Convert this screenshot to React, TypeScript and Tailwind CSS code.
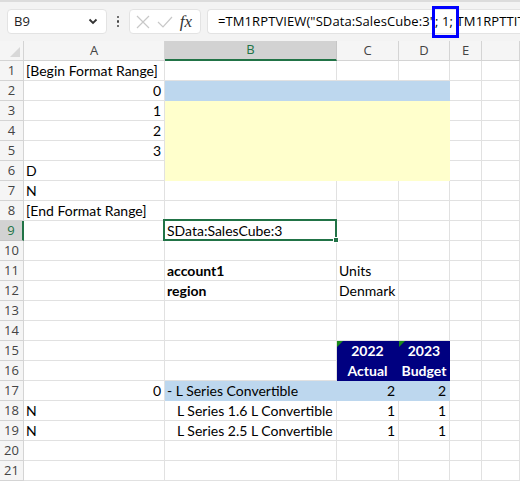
import React from "react";

type CellDef = {
  t?: string;
  align?: "l" | "r" | "c";
  bold?: boolean;
  fill?: "blue" | "yellow" | "navy";
  indent?: boolean;
  tri?: boolean;
};

const fillClass: Record<string, string> = {
  blue: "bg-[#bdd7ee] border-[#bdd7ee]",
  yellow: "bg-[#ffffcc] border-[#ffffcc]",
  navy: "bg-[#000080] border-[#000080] text-white",
};

// columns: A, B, C, D, E, F
const rows: CellDef[][] = [
  [{ t: "[Begin Format Range]" }],
  [{ t: "0", align: "r" }, { fill: "blue" }, { fill: "blue" }, { fill: "blue" }],
  [{ t: "1", align: "r" }, { fill: "yellow" }, { fill: "yellow" }, { fill: "yellow" }],
  [{ t: "2", align: "r" }, { fill: "yellow" }, { fill: "yellow" }, { fill: "yellow" }],
  [{ t: "3", align: "r" }, { fill: "yellow" }, { fill: "yellow" }, { fill: "yellow" }],
  [{ t: "D" }, { fill: "yellow" }, { fill: "yellow" }, { fill: "yellow" }],
  [{ t: "N" }],
  [{ t: "[End Format Range]" }],
  [{}, { t: "SData:SalesCube:3" }],
  [],
  [{}, { t: "account1", bold: true }, { t: "Units" }],
  [{}, { t: "region", bold: true }, { t: "Denmark" }],
  [],
  [],
  [{}, {}, { t: "2022", align: "c", bold: true, fill: "navy", tri: true }, { t: "2023", align: "c", bold: true, fill: "navy", tri: true }],
  [{}, {}, { t: "Actual", align: "c", bold: true, fill: "navy" }, { t: "Budget", align: "c", bold: true, fill: "navy" }],
  [{ t: "0", align: "r" }, { t: "- L Series Convertible", fill: "blue" }, { t: "2", align: "r", fill: "blue" }, { t: "2", align: "r", fill: "blue" }],
  [{ t: "N" }, { t: "L Series 1.6 L Convertible", indent: true }, { t: "1", align: "r" }, { t: "1", align: "r" }],
  [{ t: "N" }, { t: "L Series 2.5 L Convertible", indent: true }, { t: "1", align: "r" }, { t: "1", align: "r" }],
  [],
  [],
];

const colLetters = ["A", "B", "C", "D", "E", ""];

function Cell({ c, selected }: { c: CellDef; selected?: boolean }) {
  const align = c.align === "r" ? "justify-end pr-[3px]" : c.align === "c" ? "justify-center" : c.indent ? "justify-start pl-[12px]" : "justify-start pl-[2px]";
  return (
    <div
      className={`relative h-[20px] border-r border-b flex items-end pb-[1px] whitespace-nowrap overflow-visible text-[14px] leading-[16px] ${
        c.fill ? fillClass[c.fill] : "border-[#e1e1e1] text-black"
      } ${align} ${c.bold ? "font-bold" : ""}`}
    >
      {c.tri && (
        <span className="absolute left-0 top-0 w-0 h-0 border-t-[6px] border-t-[#1a8a1a] border-r-[6px] border-r-transparent" />
      )}
      {c.t && <span className="relative z-10">{c.t}</span>}
      {selected && (
        <span className="absolute left-[-2px] top-[-2px] right-[-1px] bottom-[-1px] border-2 border-[#217346] z-20">
          <span className="absolute right-[-4px] bottom-[-4px] w-[6px] h-[6px] bg-[#217346] border border-white" />
        </span>
      )}
    </div>
  );
}

export default function App() {
  return (
    <div className="relative w-[520px] h-[482px] overflow-hidden bg-white font-['Lato',sans-serif]">
      {/* formula bar */}
      <div className="h-[41px] bg-[#f3f3f3] border-t-2 border-[#dcdcdc] flex items-center pl-[7px] gap-[6px] font-['Open_Sans',sans-serif]">
        <div className="w-[100px] h-[25px] bg-white rounded-[4px] border border-[#e3e3e3] flex items-center justify-between pl-[6px] pr-[8px] text-[13px] text-[#222]">
          <span>B9</span>
          <svg width="10" height="7" viewBox="0 0 10 7">
            <path d="M1.5 1.5 L5 5 L8.5 1.5" stroke="#333" strokeWidth="1.8" fill="none" />
          </svg>
        </div>
        <div className="w-[10px] flex flex-col items-center gap-[2px]">
          <span className="w-[2.5px] h-[2.5px] rounded-full bg-[#444]" />
          <span className="w-[2.5px] h-[2.5px] rounded-full bg-[#444]" />
          <span className="w-[2.5px] h-[2.5px] rounded-full bg-[#444]" />
        </div>
        <div className="w-[72px] h-[25px] bg-white rounded-[4px] border border-[#e3e3e3] flex items-center justify-between px-[6px]">
          <svg width="14" height="14" viewBox="0 0 14 14">
            <path d="M1 1 L13 13 M13 1 L1 13" stroke="#c8c8c8" strokeWidth="1.2" />
          </svg>
          <svg width="16" height="12" viewBox="0 0 16 12">
            <path d="M1 6 L6 11 L15 1" stroke="#c8c8c8" strokeWidth="1.2" fill="none" />
          </svg>
          <span className="font-['Liberation_Serif',serif] italic text-[17px] text-[#333] leading-none pr-[2px]">fx</span>
        </div>
        <div className="flex-1 h-[25px] bg-white rounded-l-[4px] border border-r-0 border-[#e3e3e3] flex items-center pl-[10px] text-[13px] tracking-[0.1px] text-black whitespace-nowrap overflow-hidden">
          =TM1RPTVIEW("SData:SalesCube:3"; 1; TM1RPTTITLE
        </div>
      </div>

      {/* grid */}
      <div className="grid grid-cols-[24px_141px_172px_62px_51px_32px_1fr]">
        <div className="h-[20px] bg-[#f5f5f5] border-r border-b border-[#d4d4d4] relative">
          <span className="absolute right-[3px] bottom-[3px] w-0 h-0 border-b-[10px] border-b-[#d8d8d8] border-l-[10px] border-l-transparent" />
        </div>
        {colLetters.map((l, i) => (
          <div
            key={i}
            className={`h-[20px] flex items-center justify-center text-[13px] font-['Open_Sans',sans-serif] border-r ${
              l === "B"
                ? "bg-[#d2d2d2] border-b-2 border-b-[#217346] border-r-[#c6c6c6] text-[#217346]"
                : "bg-[#f5f5f5] border-b border-[#d4d4d4] text-[#444]"
            }`}
          >
            {l}
          </div>
        ))}
        {rows.map((r, ri) => (
          <React.Fragment key={ri}>
            <div
              className={`h-[20px] flex items-center justify-center text-[13px] font-['Open_Sans',sans-serif] border-b ${
                ri === 8
                  ? "bg-[#d2d2d2] border-r-2 border-r-[#217346] border-b-[#c6c6c6] text-[#217346]"
                  : "bg-[#f5f5f5] border-r border-[#d4d4d4] text-[#444]"
              }`}
            >
              {ri + 1}
            </div>
            {[0, 1, 2, 3, 4, 5].map((ci) => (
              <Cell key={ci} c={r[ci] || {}} selected={ri === 8 && ci === 1} />
            ))}
          </React.Fragment>
        ))}
      </div>

      {/* highlight annotation */}
      <div className="absolute left-[432px] top-[6px] w-[27px] h-[32px] border-[3px] border-[#0000ff] z-30" />
    </div>
  );
}
